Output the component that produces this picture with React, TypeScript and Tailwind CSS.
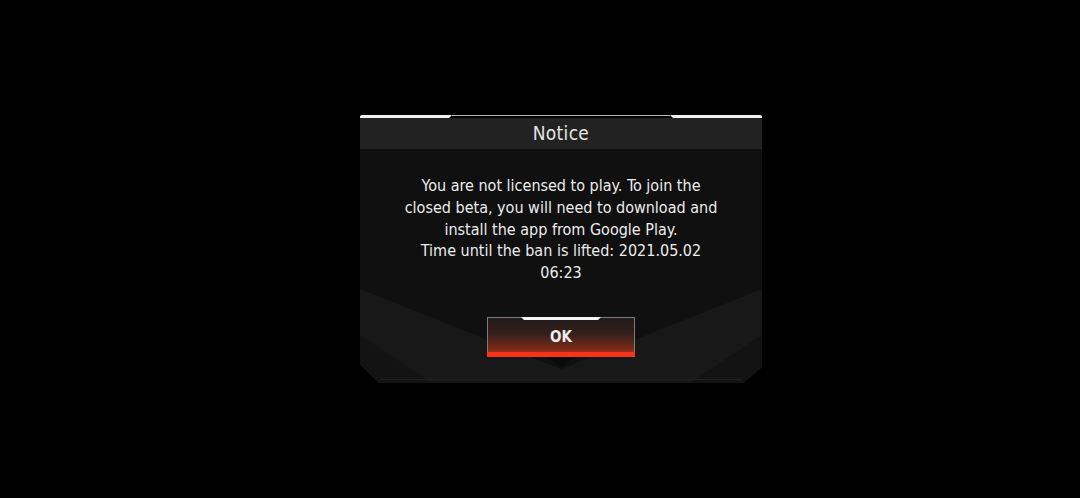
import React from "react";

const font = "font-['DejaVu_Sans_Condensed','DejaVu_Sans',sans-serif] font-stretch-condensed";

export default function App() {
  return (
    <div className="h-[498px] w-full bg-black flex items-center justify-center pl-[42px]">
      <NoticeDialog />
    </div>
  );
}

function NoticeDialog() {
  return (
    <div className="relative w-[402px] h-[268px] flex flex-col">
      {/* Top rim */}
      <div className="h-[3px] flex items-start">
        <div className="w-[92px] h-[3px] bg-[#f2f2f2] rounded-tl-[2px] [clip-path:polygon(0_0,100%_0,calc(100%-3px)_100%,0_100%)]" />
        <div className="flex-1 h-px bg-[#b5b5b5]" />
        <div className="w-[92px] h-[3px] bg-[#f2f2f2] rounded-tr-[2px] [clip-path:polygon(0_0,100%_0,100%_100%,3px_100%)]" />
      </div>

      {/* Header */}
      <div className="h-[31px] bg-[#222222] flex items-center justify-center">
        <h1 className={`${font} text-[19px] text-[#e4e4e4] tracking-[0.3px] leading-none pb-[1px]`}>Notice</h1>
      </div>

      {/* Body */}
      <div className="relative flex-1 bg-[#101010] [clip-path:polygon(0_0,100%_0,100%_calc(100%-16px),calc(100%-19px)_100%,19px_100%,0_calc(100%-19px))]">
        <BodyBackdrop />
        <div className="relative flex flex-col items-center pt-[26px]">
          <p className={`${font} text-[16px] leading-[21.8px] text-[#ececec] text-center w-[322px]`}>
            You are not licensed to play. To join the closed beta, you will need to download and install the app from
            Google Play.
            <br />
            Time until the ban is lifted: 2021.05.02 06:23
          </p>
          <OkButton />
        </div>
      </div>
    </div>
  );
}

function BodyBackdrop() {
  return (
    <svg className="absolute inset-0 w-full h-full" viewBox="0 0 402 234" preserveAspectRatio="none">
      <polygon points="0,0 402,0 402,234 0,234" fill="#101010" />
      <polygon points="0,140 201,220 402,140 402,234 0,234" fill="#181818" />
      <polygon points="0,186 72,234 0,234" fill="#131313" />
      <polygon points="402,186 330,234 402,234" fill="#131313" />
      <polygon points="186,207 216,207 201,218" fill="#0a0a0a" />
      <line x1="20" y1="230.5" x2="382" y2="230.5" stroke="#222222" strokeWidth="1" />
    </svg>
  );
}

function OkButton() {
  return (
    <button className="relative mt-[33px] w-[148px] h-[40px] border border-[#7c7c7c] border-b-0 flex flex-col bg-[linear-gradient(to_bottom,#211a19_0%,#33201c_40%,#722918_75%,#c0361b_100%)]">
      <span className="absolute -top-px left-[33px] w-[80px] h-[3px] bg-[#f4f4f4] [clip-path:polygon(0_0,100%_0,calc(100%-3px)_100%,3px_100%)]" />
      <span className={`${font} flex-1 flex items-center justify-center text-[15px] font-bold text-[#ededed] leading-none pt-[5px]`}>
        OK
      </span>
      <span className="h-[5px] -mx-px bg-[#f5341a]" />
    </button>
  );
}
